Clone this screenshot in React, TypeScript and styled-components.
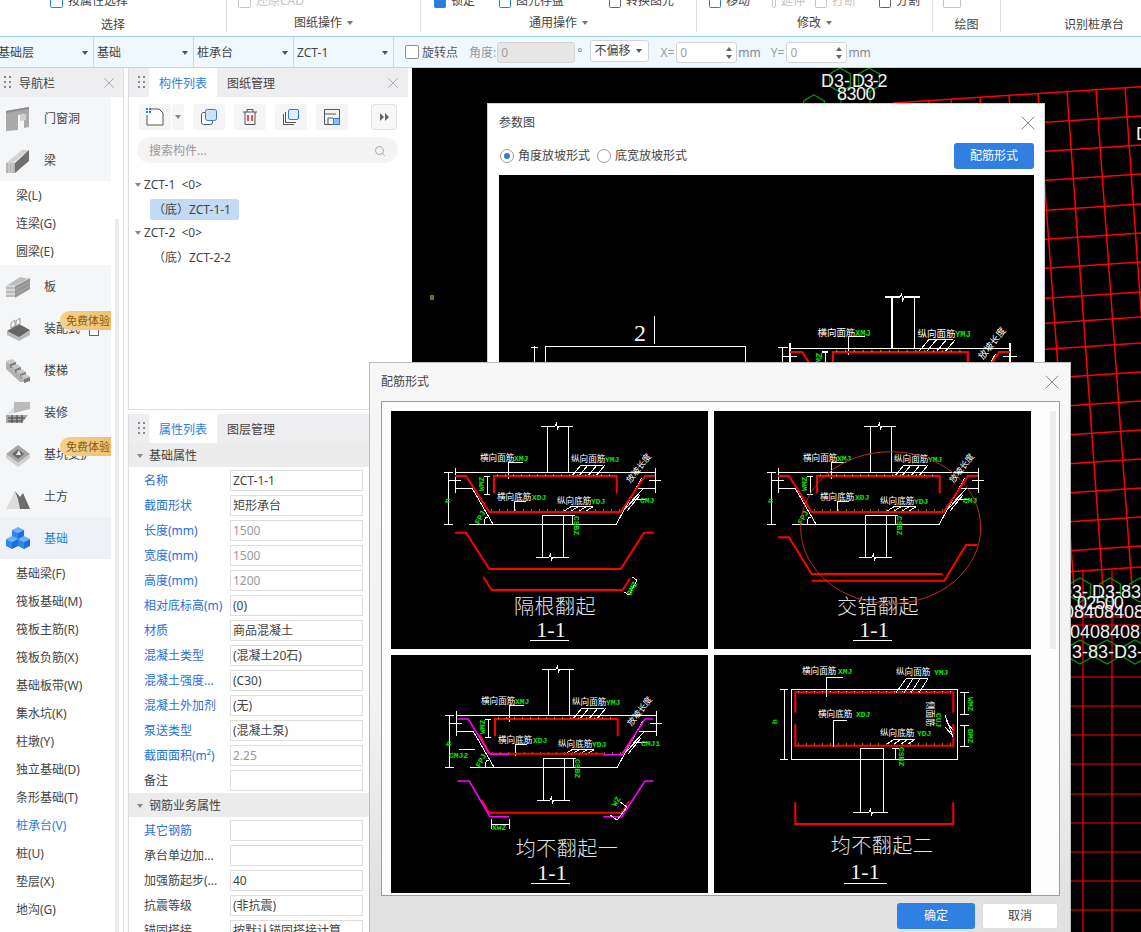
import React from "react";
import styled, { createGlobalStyle } from "styled-components";
import { Search, X } from "lucide-react";

const Global = createGlobalStyle`
  html, body { margin: 0; padding: 0; background: #fff; }
  body { font-family: "Noto Sans", "Noto Sans CJK SC", sans-serif; font-size: 12px; color: #333; }
`;

const Page = styled.div`
  position: relative; width: 1141px; height: 932px; overflow: hidden;
  display: flex; flex-direction: column; background: #fff;
`;

/* ---------- ribbon ---------- */
const Ribbon = styled.div`
  flex: none; height: 37px; box-sizing: border-box; display: flex; overflow: hidden;
  border-bottom: 1px solid #9dcdf5; background: #fff;
`;
const RibbonGroup = styled.div<{ $w: number }>`
  flex: none; width: ${p => p.$w}px; height: 32px; box-sizing: border-box;
  border-right: 1px solid #dcdcdc; display: flex; flex-direction: column;
`;
const LastGroup = styled(RibbonGroup)`border-right: 0;`;
const GroupTools = styled.div<{ $pad: number }>`
  flex: none; height: 18px; margin-top: -8px; padding-left: ${p => p.$pad}px;
  display: flex; align-items: center;
`;
const RibbonItem = styled.div<{ $w?: number; $off?: boolean }>`
  flex: none; display: flex; align-items: center; gap: 4px; line-height: 18px;
  ${p => (p.$w ? `width: ${p.$w}px;` : "")}
  color: ${p => (p.$off ? "#c4c4c4" : "#444")};
`;
const GroupLabel = styled.div<{ $low?: boolean }>`
  flex: 1; display: flex; justify-content: center; align-items: flex-start; gap: 5px;
  line-height: 16px; color: #444; padding-top: ${p => (p.$low ? 7 : 5)}px;
`;
const MiniCaret = styled.span<{ $c?: string }>`
  display: inline-block; width: 0; height: 0; margin-top: 6px;
  border-left: 3.5px solid transparent; border-right: 3.5px solid transparent;
  border-top: 4px solid ${p => p.$c || "#777"};
`;
const TreeCaret = styled(MiniCaret)`margin: 0; border-top-color: #888;`;

const Glyph = ({ w = 14, c = "#666", fill = "none" }: { w?: number; c?: string; fill?: string }) => (
  <svg width={w} height={16} viewBox={`0 0 ${w} 16`}>
    <rect x={1.5} y={1.5} width={w - 3} height={13} rx={1} fill={fill} stroke={c} />
  </svg>
);

/* ---------- option bar ---------- */
const OptionBar = styled.div`
  flex: none; height: 31px; box-sizing: border-box; display: flex; align-items: center;
  background: #eff8fe; border-bottom: 1px solid #bcd6ea; line-height: 16px; overflow: hidden;
`;
const OptionCell = styled.div<{ $w: number; $lead?: boolean }>`
  flex: none; width: ${p => p.$w}px; height: 30px; box-sizing: border-box; padding: 1px 5px 0 3px;
  ${p => (p.$lead ? "margin-left: -5px;" : "")}
  border-right: 1px solid #cfd8df; display: flex; align-items: center; justify-content: space-between; color: #444;
`;
const OptionCaret = styled(MiniCaret)`margin: 0; border-top-color: #555;`;
const CheckBox = styled.span`
  flex: none; width: 14px; height: 14px; box-sizing: border-box; margin: 0 3px 0 11px;
  border: 1px solid #8f8f8f; border-radius: 2px; background: #fff;
`;
const OptText = styled.span<{ $m?: number; $c?: string }>`
  flex: none; margin-left: ${p => p.$m ?? 0}px; padding-top: 1px; color: ${p => p.$c || "#555"};
`;
const OptInput = styled.div<{ $w: number; $off?: boolean; $ml?: number }>`
  flex: none; width: ${p => p.$w}px; height: 21px; box-sizing: border-box; margin-left: ${p => p.$ml ?? 1}px; padding: 1px 4px 0 3px;
  display: flex; align-items: center; justify-content: space-between; border: 1px solid #d4d4d4; border-radius: 3px;
  background: ${p => (p.$off ? "#e6e6e6" : "#fff")}; color: #a0a0a0;
`;
const Spin = styled.span`display: flex; flex-direction: column; gap: 4px;`;
const SpinUp = styled.i`
  display: block; width: 0; height: 0;
  border-left: 3px solid transparent; border-right: 3px solid transparent; border-bottom: 4px solid #666;
`;
const SpinDown = styled(SpinUp)`border-bottom: 0; border-top: 4px solid #666;`;
const OptSelect = styled.div`
  flex: none; width: 59px; height: 22px; box-sizing: border-box; margin-left: 8px; padding: 0 6px 0 3px; margin-top: -3px;
  display: flex; align-items: center; justify-content: space-between; border: 1px solid #d4d4d4; border-radius: 3px;
  background: #fff; color: #444;
`;

/* ---------- workspace ---------- */
const Workspace = styled.div`flex: 1; min-height: 0; display: flex;`;
const NavPanel = styled.div`
  flex: none; width: 124px; box-sizing: border-box; border-right: 1px solid #dedede;
  display: flex; flex-direction: column; overflow: hidden;
`;
const PanelHead = styled.div`
  flex: none; height: 29px; display: flex; align-items: center; background: #eeeef0; color: #444; line-height: 16px;
`;
const HeadTitle = styled.span`flex: none; padding-top: 2px;`;
const Dots = styled.span<{ $m: number; $l: number }>`
  flex: none; width: 7px; height: 14px; margin: 0 ${p => p.$m}px 0 ${p => p.$l}px;
  background-image: radial-gradient(circle at 1.2px 1.2px, #8a8a8a 1.1px, transparent 1.3px);
  background-size: 5px 5px;
`;
const HeadFill = styled.span`flex: 1;`;
const CloseX = styled.span<{ $r: number; $c?: string }>`flex: none; display: flex; margin-right: ${p => p.$r}px; color: ${p => p.$c || "#9a9a9a"};`;
const NavBody = styled.div`flex: 1; min-height: 0; display: flex;`;
const NavList = styled.div`flex: none; width: 111px; display: flex; flex-direction: column;`;
const NavTrack = styled.div`flex: 1; padding: 122px 0 0 4px;`;
const NavThumb = styled.div`width: 4px; height: 100%; background: #ececec;`;
const NavItem = styled.div<{ $on?: boolean }>`
  position: relative; flex: none; height: 42px; box-sizing: border-box; display: flex; align-items: center; padding: 1px 0 0 6px; gap: 14px;
  line-height: 16px; background: ${p => (p.$on ? "#eef1f5" : "#f5f6f8")}; color: ${p => (p.$on ? "#2b7de0" : "#444")};
`;
const NavSub = styled.div<{ $on?: boolean }>`
  flex: none; height: 28px; line-height: 29px; padding-left: 16px;
  color: ${p => (p.$on ? "#2b7de0" : "#444")};
`;
const Badge = styled.span`
  position: absolute; right: 0; top: 4px; width: 51px; height: 19px; line-height: 19px; padding-left: 6px; box-sizing: border-box;
  border-radius: 10px 0 0 10px; background: linear-gradient(90deg, #f4d08f, #eec170); color: #8b5a12; white-space: nowrap; overflow: hidden;
  font-size: 11px;
`;
const LockMark = styled.span`
  position: absolute; right: 12px; bottom: 13px; width: 8px; height: 8px; border: 1px solid #666; background: #fff;
`;
const Gutter = styled.div`flex: none; width: 4px;`;
const MiddleColumn = styled.div`
  flex: none; width: 280px; display: flex; flex-direction: column; gap: 4px;
`;
const ListPanel = styled.div`
  flex: none; height: 342px; box-sizing: border-box; border: 1px solid #dedede; border-top: 0; border-right: 0;
  display: flex; flex-direction: column; overflow: hidden; background: #fff;
`;
const PropPanel = styled(ListPanel)`flex: 1; height: auto; border-bottom: 0;`;
const Tab = styled.span<{ $on?: boolean }>`
  flex: none; width: 68px; height: 29px; line-height: 32px; text-align: center;
  background: ${p => (p.$on ? "#fff" : "transparent")}; color: ${p => (p.$on ? "#2b7de0" : "#444")};
`;
const ToolRow = styled.div`flex: none; display: flex; align-items: center; padding: 7px 11px 0 10px;`;
const ToolBtn = styled.div<{ $m?: number }>`
  flex: none; width: 32px; height: 26px; display: flex; align-items: center; justify-content: center;
  background: #f5f5f5; border-radius: 3px; margin-right: ${p => p.$m ?? 9}px;
`;
const SplitCaret = styled(ToolBtn)`width: 12px; margin-left: 1px;`;
const MoreBtn = styled.div`
  flex: none; width: 26px; height: 26px; box-sizing: border-box; display: flex; align-items: center; justify-content: center;
  background: #f7f7f7; border: 1px solid #e2e2e2; border-radius: 3px;
`;
const SearchBox = styled.div`
  flex: none; margin: 7px 10px 0 8px; height: 26px; box-sizing: border-box; border-radius: 13px; background: #f4f4f4; display: flex; align-items: center;
  padding: 1px 12px 0; justify-content: space-between; color: #999; line-height: 16px;
`;
const Tree = styled.div`flex: none; padding-top: 10px; display: flex; flex-direction: column; color: #444;`;
const TreeRoot = styled.div`height: 24px; display: flex; align-items: center; gap: 3px; padding-left: 6px; line-height: 16px;`;
const TreeLeafRow = styled.div`height: 24px; display: flex; align-items: center; padding-left: 21px;`;
const TreeLeaf = styled.span<{ $on?: boolean }>`
  display: inline-block; height: 21px; line-height: 21px; padding: 0 3px; border-radius: 2px; width: 89px; box-sizing: border-box;
  white-space: nowrap; background: ${p => (p.$on ? "#c3daf2" : "transparent")};
`;
const SectionRow = styled.div`
  flex: none; height: 24px; box-sizing: border-box; padding: 2px 0 0 8px; display: flex; align-items: center; gap: 6px; line-height: 16px;
  background: #ececec; color: #444;
`;
const PropRow = styled.div`flex: none; height: 25px; box-sizing: border-box; padding: 3px 0 0 15px; display: flex; align-items: flex-start;`;
const PropLabel = styled.span<{ $blue?: boolean }>`
  flex: none; width: 86px; line-height: 21px; white-space: nowrap; overflow: hidden; color: ${p => (p.$blue ? "#2a6fe0" : "#444")};
`;
const PropValue = styled.span<{ $grey?: boolean }>`
  flex: none; width: 133px; height: 21px; box-sizing: border-box; border: 1px solid #dedede; padding-left: 2px; line-height: 19px;
  white-space: nowrap; overflow: hidden; background: #fff; color: ${p => (p.$grey ? "#999" : "#444")};
`;
const PropList = styled.div`flex: 1; min-height: 0; display: flex; flex-direction: column; overflow: hidden;`;
const SectionGap = styled.div`flex: none; height: 1px;`;

const Canvas = styled.div`flex: 1; min-width: 0; background: #000; overflow: hidden;`;
const CanvasSvg = styled.svg`display: block;`;
const CadText = styled.text<{ $sp?: number }>`
  font-family: "Liberation Sans", sans-serif; font-size: 18px; fill: #f2f2f2; letter-spacing: ${p => p.$sp ?? 0}px;
`;

/* ---------- dialogs ---------- */
const ParamDialog = styled.div`
  position: absolute; left: 487px; top: 103px; width: 558px; height: 300px; box-sizing: border-box; padding: 0 10px 0 11px;
  background: #fff; border: 1px solid #cfcfcf; display: flex; flex-direction: column; overflow: hidden;
`;
const DialogHead = styled.div`
  flex: none; height: 38px; display: flex; align-items: center; justify-content: space-between; color: #444; line-height: 16px;
`;
const ParamOptions = styled.div`flex: none; height: 26px; margin-top: 1px; display: flex; align-items: center; color: #444; line-height: 16px;`;
const Radio = styled.span<{ $on?: boolean; $m?: number }>`
  flex: none; width: 14px; height: 14px; box-sizing: border-box; border-radius: 50%; border: 1px solid #9b9b9b; background: #fff;
  margin: 0 4px 0 ${p => p.$m ?? 1}px; display: flex; align-items: center; justify-content: center;
  &::after { content: ""; width: 6px; height: 6px; border-radius: 50%; background: ${p => (p.$on ? "#2b7de0" : "transparent")}; }
`;
const PrimaryBtn = styled.button<{ $w: number }>`
  flex: none; width: ${p => p.$w}px; height: 26px; border: 0; border-radius: 3px; padding: 0; background: #2f80e2; color: #fff;
  font: inherit; line-height: 16px;
`;
const GhostBtn = styled(PrimaryBtn)`background: #fff; color: #444; border: 1px solid #dddddd;`;
const PushRight = styled.span`flex: 1;`;
const BlackBox = styled.div`flex: none; margin-top: 6px; height: 260px; background: #000; overflow: hidden;`;
const BlackArt = styled.svg`display: block;`;
const FormDialog = styled.div`
  position: absolute; left: 369px; top: 362px; width: 702px; height: 580px; box-sizing: border-box; padding: 0 11px;
  border: 1px solid #bdbdbd; background: linear-gradient(180deg, #f7f7f7 0, #f2f2f2 60%, #e1e1e1 92%); display: flex; flex-direction: column;
`;
const GalleryBox = styled.div`
  flex: none; height: 495px; box-sizing: border-box; width: 679px; border: 1px solid #9c9c9c; background: #fcfcfc; overflow: hidden;
  display: flex; padding: 9px 0 0 9px;
`;
const Gallery = styled.div`flex: none; display: grid; grid-template-columns: 317px 317px; grid-auto-rows: 238px; gap: 6px;`;
const Plate = styled.svg`display: block; background: #000;`;
const GalleryScroll = styled.div`flex: none; width: 6px; height: 238px; margin-left: 19px; background: #ececec;`;
const FormFoot = styled.div`flex: none; margin-top: 7px; padding-right: 1px; display: flex; justify-content: flex-end; gap: 7px;`;

/* ---------- drawing text ---------- */
const DLabel = styled.text`font-family: "Noto Sans CJK SC", sans-serif; font-size: 8.6px; fill: #fff;`;
const DCode = styled.text`font-family: "Liberation Mono", monospace; font-size: 8px; font-weight: bold; fill: #00e600;`;
const DTitle = styled.text`
  font-family: "Noto Sans CJK SC", sans-serif; font-size: 20px; font-weight: 300; fill: #e2e2e2; text-anchor: middle; letter-spacing: 0.5px;
`;
const DSect = styled.text`font-family: "Liberation Serif", serif; font-size: 22px; fill: #f5f5f5; text-anchor: middle;`;
const DBigDigit = styled(DSect)`font-size: 24px;`;

const W = ({ d }: { d: string }) => <path d={d} fill="none" stroke="#fff" strokeWidth={1} shapeRendering="crispEdges" />;
const R = ({ d, c = "#f00", sw = 2 }: { d: string; c?: string; sw?: number }) => <path d={d} fill="none" stroke={c} strokeWidth={sw} />;

const Dots2 = ({ x1, x2, y, step = 8 }: { x1: number; x2: number; y: number; step?: number }) => {
  const a: number[] = [];
  for (let x = x1; x <= x2; x += step) a.push(x);
  return <>{a.map(x => <rect key={x} x={x} y={y} width={1} height={1} fill="#ff0" />)}</>;
};

/* shared sloped pile-cap section */
const SlopedFrame = ({ cmj = "CMJ" }: { cmj?: string }) => (
  <g>
    <W d="M150 15H164l1.5-3 1 6 1.5-3H182M156.7 15V61.5M177 15V61.5M64 61.5H264M64 57V82M264 57V82M64 77H81L102.3 113.7M78 113.7H225L250.7 67M247 77H264" />
    <W d="M57 61V113.7M53 61H62M53 113.7H62M58 69H70M258 69H270" />
    <W d="M145 146.3H158l1.5-3 1 6 1.5-3H178M151 146.3V104.7H172V146.3" />
    <W d="M96 65V83M93 65H99M93 83H99M172 104.7H184M181 105V113.5M93 113.7Q93 105 98 106" />
    <W d="M180 66L190 54H212M187 66L197 54M196 66L206 54M204 66L214 54" />
    <W d="M172 100.7L180 95.7H201M179 100.7L187 95.7M187 100.7L195 95.7M194 100.7L202 95.7" />
    <W d="M117 68V51.3H132M123 102V90H135" />
    <W d="M232 100L244 88H255M236 100L249 84M238 93L252 78" />
    <R d="M103 82.3V65H225.7V82.3" />
    <Dots2 x1={106} x2={224} y={63.5} />
    <Dots2 x1={100} x2={228} y={98.5} />
    <DLabel x={89} y={50}>横向面筋</DLabel>
    <DCode x={123} y={50}>XMJ</DCode>
    <DLabel x={180} y={51}>纵向面筋</DLabel>
    <DCode x={214} y={51}>YMJ</DCode>
    <DLabel x={106} y={89}>横向底筋</DLabel>
    <DCode x={141} y={89}>XDJ</DCode>
    <DLabel x={166} y={93}>纵向底筋</DLabel>
    <DCode x={200} y={93}>YDJ</DCode>
    <DCode x={0} y={0} transform="translate(59 92) rotate(-90)">h</DCode>
    <DCode x={0} y={0} transform="translate(93 80) rotate(-90)">WMZ</DCode>
    <DCode x={0} y={0} transform="translate(183 105) rotate(90)">CSBZ</DCode>
    <DCode x={0} y={0} transform="translate(88 114) rotate(-62)">FPJ</DCode>
    <DCode x={249} y={92}>{cmj}</DCode>
    <DLabel x={0} y={0} textAnchor="middle" transform="translate(250 59) rotate(-52)">放坡长度</DLabel>
  </g>
);

const PlateOne = () => (
  <Plate width={317} height={238} viewBox="0 0 317 238">
    <SlopedFrame />
    <R d="M64 65H75L98.3 101H229.7L254 65H264" />
    <R d="M64 121.7H75L98.3 158H229.7L253 121.7H263" />
    <R d="M92.3 165.7L100.7 179H231.7L239 167.3" />
    <W d="M241 166L246 169L238 184L233 181" />
    <DCode x={0} y={0} transform="translate(240 185) rotate(-62)">DMZ</DCode>
    <DTitle x={164} y={203}>隔根翻起</DTitle>
    <DSect x={160} y={226}>1-1</DSect>
    <W d="M139 229H178" />
  </Plate>
);
const PlateTwo = () => (
  <Plate width={317} height={238} viewBox="0 0 317 238">
    <SlopedFrame />
    <R d="M64 65H75L97.7 101H229.7L254 65H264" />
    <R d="M64 126.3H75L97.7 163H228.7" />
    <R d="M97.7 169.7H230.3L252 134H263.3" />
    <DTitle x={164} y={203}>交错翻起</DTitle>
    <DSect x={160} y={226}>1-1</DSect>
    <W d="M139 229H178" />
    <ellipse cx={176.7} cy={116.7} rx={90} ry={76} fill="none" stroke="#b92b2b" strokeWidth={1} />
  </Plate>
);
const PlateThree = () => (
  <Plate width={317} height={238} viewBox="0 0 317 238">
    <g transform="translate(1 -1)"><SlopedFrame cmj="CMJ1" /></g>
    <R d="M99 98.7H212.3" />
    <R d="M89 80L98 99M231.7 99L242 83" />
    <R d="M66.3 64H77.3L99 99.3H118M212.3 99.7H230.7L254 64H262.3" c="#f0f" sw={1.6} />
    <R d="M99 157.7H230.7" />
    <R d="M90.7 145L98.3 157.7M230.7 157.7L238.3 146" sw={1.5} />
    <R d="M66.3 126H78.3L99 161.7H118M212.3 161.7H230.7L254 126H262.3" c="#f0f" sw={1.6} />
    <W d="M100 164V174M118 164V174M100 169H118M229 147L236 152L226 165L219 160" />
    <DCode x={101} y={175}>XWZ</DCode>
    <DCode x={58} y={103}>CMJ2</DCode>
    <W d="M68 94H84" />
    <DCode x={0} y={0} transform="translate(225 152) rotate(-60)">WZ</DCode>
    <DTitle x={176} y={201}>均不翻起一</DTitle>
    <DSect x={161} y={225}>1-1</DSect>
    <W d="M140 228H179" />
  </Plate>
);
const PlateFour = () => (
  <Plate width={317} height={238} viewBox="0 0 317 238">
    <W d="M77.3 34.3H243.7V104.3H77.3ZM70 34.3V104.3M66 34.3H74M66 104.3H74" />
    <R d="M81.3 57.7V37.3H239.3V57.7M81.3 69V90.7H239.3V69" />
    <W d="M146.7 157.3V93.3H169.3V157.3M139.3 157.3H155l1.5-3 1 6 1.5-3H173.7" />
    <W d="M112.3 41.7V22.3H129M119.3 92.3V65.7H132.7" />
    <W d="M182 37.7L192 23.7H214M190 37.7L199 23.7M197 37.7L206 23.7M205 37.7L214 23.7" />
    <W d="M173 89L180 84.3H201M180 89L187 84.3M187 89L194 84.3M194 89L201 84.3" />
    <W d="M250.3 37.3V59.3M246 37.3H255M246 59.3H255M250.3 70V91.7M246 70H255M246 91.7H255M181.7 93V104M178 93.3H185" />
    <W d="M231 60L239 82M232 66L239 75M231 72L238 80" />
    <Dots2 x1={84} x2={236} y={36} step={8} />
    <Dots2 x1={84} x2={236} y={88.5} step={8} />
    <DLabel x={88} y={19}>横向面筋</DLabel>
    <DCode x={124} y={19}>XMJ</DCode>
    <DLabel x={182} y={20}>纵向面筋</DLabel>
    <DCode x={220} y={20}>YMJ</DCode>
    <DLabel x={104} y={62}>横向底筋</DLabel>
    <DCode x={142} y={62}>XDJ</DCode>
    <DLabel x={166} y={81}>纵向底筋</DLabel>
    <DCode x={203} y={81}>YDJ</DCode>
    <DCode x={0} y={0} transform="translate(63 69) rotate(-90)">h</DCode>
    <DCode x={0} y={0} transform="translate(254 42) rotate(90)">WMZ</DCode>
    <DCode x={0} y={0} transform="translate(254 74) rotate(90)">DMZ</DCode>
    <DCode x={0} y={0} transform="translate(185 92) rotate(90)">CSBZ</DCode>
    <DCode x={0} y={0} transform="translate(222 58) rotate(90)">CUJ</DCode>
    <DLabel x={0} y={0} transform="translate(213 46) rotate(90)">侧面筋</DLabel>
    <R d="M81.3 147.3V169H239.3V147.3" />
    <DTitle x={168} y={198}>均不翻起二</DTitle>
    <DSect x={151} y={224}>1-1</DSect>
    <W d="M130 228.3H172.7" />
  </Plate>
);

/* ---------- nav icons ---------- */
const Cube = ({ x, y }: { x: number; y: number }) => (
  <g transform={`translate(${x} ${y})`}>
    <path d="M0 -6L6 -3L0 0L-6 -3Z" fill="#6cb0f8" />
    <path d="M-6 -3L0 0V7L-6 4Z" fill="#2f86ee" />
    <path d="M6 -3L0 0V7L6 4Z" fill="#1a6fdc" />
  </g>
);
const Step = ({ x, y }: { x: number; y: number }) => (
  <g transform={`translate(${x} ${y})`}>
    <path d="M0 2L6 0L10 3L4 5Z" fill="#c8c8c8" />
    <path d="M4 5L10 3V7L4 9Z" fill="#7c7c7c" />
  </g>
);
const NavGlyph = styled.svg`flex: none; display: block;`;
const NavIcon = ({ k }: { k: string }) => {
  const pick = () => {
    switch (k) {
      case "door":
        return (<><path d="M0 4L23 0V20L18 21V7L12 8V23L0 24Z" fill="#a9a9a9" /><path d="M0 4L23 0L23 2L0 6Z" fill="#8c8c8c" /><path d="M14 8L20 7V13L14 14Z" fill="#cfcfcf" /></>);
      case "beam":
        return (<><path d="M0 14L16 1L23 1L7 14Z" fill="#d4d4d4" /><path d="M0 14H9V24H0Z" fill="#b4b4b4" /><path d="M3 14V24M6 14V24" stroke="#eee" strokeWidth={0.7} /><path d="M9 14L23 1V12L9 24Z" fill="#6f6f6f" /></>);
      case "slab":
        return (<><path d="M0 11L14 2L24 4V14L9 22H0Z" fill="#bdbdbd" /><path d="M0 11H9L24 3M0 15H9L24 7M0 19H9L24 11" stroke="#f0f0f0" fill="none" /><path d="M9 11L24 3V14L9 23Z" fill="#757575" opacity={0.55} /></>);
      case "prefab":
        return (<><path d="M1 14L13 7L24 13L13 21Z" fill="#666" /><path d="M1 14V18L13 24L24 18V13L13 20Z" fill="#b8b8b8" /><path d="M5 6L9 3V9L5 11ZM10 4L14 1V7L10 9Z" fill="none" stroke="#999" /></>);
      case "stair":
        return (<><path d="M0 2V10L14 23H18V18L4 5Z" fill="#b2b2b2" /><Step x={0} y={0} /><Step x={5} y={5} /><Step x={10} y={10} /><Step x={14} y={15} /></>);
      case "finish":
        return (<><path d="M8 12V1H24V8Z" fill="#bbb" /><path d="M0 14H22L16 22H0Z" fill="#a8a8a8" /><path d="M2 17H19M2 20H16M6 14V22M11 14V22M16 14V22" stroke="#444" /><path d="M0 14L8 6V12Z" fill="#ddd" /></>);
      case "pit":
        return (<><path d="M0 11L12 2L24 11L12 20Z" fill="#a6a6a6" /><path d="M0 11V15L12 24L24 15V11L12 20Z" fill="#cfcfcf" /><path d="M6 11L12 6L18 11L12 16Z" fill="#6b6b6b" /><path d="M10 12L13 7L15 12Z" fill="#eee" /></>);
      case "earth":
        return (<><path d="M0 24L9 6L14 12L17 8L24 24Z" fill="#dcdcdc" /><path d="M9 6L12 14L14 24H24L17 8L14 12Z" fill="#6d6d6d" /></>);
      case "found":
        return (<><Cube x={12} y={6} /><Cube x={6} y={15} /><Cube x={18} y={15} /></>);
      default:
        return null;
    }
  };
  return <NavGlyph width={24} height={24} viewBox="0 0 24 24">{pick()}</NavGlyph>;
};

/* ---------- toolbar icons ---------- */
const NewIcon = () => (
  <svg width={22} height={22} viewBox="0 0 22 22">
    <path d="M7 3H15L19 7V19H3V9" fill="#fff" stroke="#555" />
    <rect x={2} y={2} width={5} height={5} fill="#2b7de0" />
    <path d="M2 4.5H7M4.5 2V7" stroke="#fff" />
  </svg>
);
const CopyIcon = () => (
  <svg width={18} height={18} viewBox="0 0 18 18">
    <rect x={1.5} y={4.5} width={11} height={12} rx={2} fill="#fff" stroke="#555" />
    <rect x={5.5} y={1.5} width={11} height={11} rx={2} fill="#cfe2fa" stroke="#2b7de0" />
  </svg>
);
const TrashIcon = () => (
  <svg width={16} height={18} viewBox="0 0 16 18">
    <path d="M1 4H15M5 4V1.5H11V4M3 4V16.5H13V4" fill="none" stroke="#555" />
    <path d="M6 7V13M10 7V13" stroke="#e02020" strokeWidth={1.5} />
  </svg>
);
const StackIcon = () => (
  <svg width={18} height={18} viewBox="0 0 18 18">
    <path d="M1.5 6V16.5H12" fill="none" stroke="#555" />
    <path d="M3.5 4V14.5H14" fill="none" stroke="#555" />
    <rect x={6.5} y={1.5} width={10} height={10} rx={1.5} fill="#e3eefc" stroke="#2b7de0" />
  </svg>
);
const SaveIcon = () => (
  <svg width={18} height={18} viewBox="0 0 18 18">
    <path d="M1.5 1.5H16.5V10M10 16.5H1.5V1.5M1.5 6H13M5 16.5V10H10" fill="none" stroke="#555" />
    <rect x={10.5} y={10.5} width={6} height={6} fill="#8ec0f7" stroke="#2b7de0" />
  </svg>
);
const MoreIcon = () => (
  <svg width={9} height={8} viewBox="0 0 9 8">
    <path d="M0 0L4 4L0 8ZM5 0L9 4L5 8Z" fill="#666" />
  </svg>
);

/* ---------- canvas ---------- */
const Hex = ({ x, y, r = 12 }: { x: number; y: number; r?: number }) => {
  const pts = [0, 1, 2, 3, 4, 5]
    .map(i => {
      const a = (Math.PI / 3) * i + Math.PI / 6;
      return `${x + r * Math.cos(a)},${y + r * Math.sin(a)}`;
    })
    .join(" ");
  return <polygon points={pts} fill="none" stroke="#0c8f0c" strokeWidth={1.3} />;
};
const hLines = [86.7, 116, 145, 174, 204, 233, 262, 292, 317, 343, 372, 401, 430, 459, 488, 517, 546, 567];
const vLines = [929, 951, 980, 1009, 1038, 1067, 1096, 1125];
const flatLines = [617, 625, 677, 706, 735, 764, 794, 823, 852, 881, 910];

const CanvasArt = () => (
  <CanvasSvg width={729} height={864} viewBox="412 68 729 864">
    {hLines.map(y => (
      <line key={y} x1={893} y1={y + 248 * 0.066} x2={1141} y2={y} stroke="#f00" strokeWidth={1.5} />
    ))}
    {vLines.map(x => {
      const top = 86.7 + (1141 - x) * 0.066;
      return <line key={x} x1={x} y1={top} x2={x + (585 - 92) * 0.0726} y2={585} stroke="#f00" strokeWidth={1.5} />;
    })}
    {flatLines.map(y => <line key={y} x1={1071} y1={y} x2={1141} y2={y} stroke="#f00" strokeWidth={1.2} />)}
    <line x1={1083} y1={570} x2={1083} y2={932} stroke="#f00" strokeWidth={1.2} />
    <line x1={1112} y1={570} x2={1112} y2={932} stroke="#f00" strokeWidth={1.2} />
    <rect x={430} y={295} width={4} height={5} fill="#6f6f14" />
    <Hex x={840} y={80} /><Hex x={869} y={80} /><Hex x={814} y={107} />
    <line x1={870} y1={92} x2={870} y2={105} stroke="#0c8f0c" />
    <line x1={841} y1={96} x2={841} y2={105} stroke="#0c8f0c" />
    <CadText x={821} y={87}>D3-</CadText>
    <CadText x={852} y={87} $sp={-1.2}>D3-2</CadText>
    <CadText x={837} y={100} $sp={-0.5}>8300</CadText>
    <CadText x={1136} y={140}>D</CadText>
    <Hex x={1080} y={590} /><Hex x={1110} y={590} /><Hex x={1140} y={590} />
    <Hex x={1080} y={652} /><Hex x={1107} y={652} /><Hex x={1135} y={652} />
    <CadText x={1059} y={598}>D3-</CadText>
    <CadText x={1092} y={598}>D3-</CadText>
    <CadText x={1121} y={598}>83</CadText>
    <CadText x={1077} y={609} $sp={-0.8}>02500</CadText>
    <CadText x={1064} y={618}>08408408</CadText>
    <CadText x={1070} y={638}>0408408-</CadText>
    <CadText x={1072} y={658}>3-83-D3-</CadText>
  </CanvasSvg>
);

type Row = { l: string; v?: string; b?: boolean; g?: boolean };
const baseRows: Row[] = [
  { l: "名称", v: "ZCT-1-1", b: true },
  { l: "截面形状", v: "矩形承台", b: true },
  { l: "长度(mm)", v: "1500", b: true, g: true },
  { l: "宽度(mm)", v: "1500", b: true, g: true },
  { l: "高度(mm)", v: "1200", b: true, g: true },
  { l: "相对底标高(m)", v: "(0)", b: true },
  { l: "材质", v: "商品混凝土", b: true },
  { l: "混凝土类型", v: "(混凝土20石)", b: true },
  { l: "混凝土强度...", v: "(C30)", b: true },
  { l: "混凝土外加剂", v: "(无)", b: true },
  { l: "泵送类型", v: "(混凝土泵)", b: true },
  { l: "截面面积(m²)", v: "2.25", b: true, g: true },
  { l: "备注" },
];
const steelRows: Row[] = [
  { l: "其它钢筋", b: true },
  { l: "承台单边加..." },
  { l: "加强筋起步(...", v: "40" },
  { l: "抗震等级", v: "(非抗震)" },
  { l: "锚固搭接", v: "按默认锚固搭接计算" },
];
const subs1 = ["梁(L)", "连梁(G)", "圆梁(E)"];
const subs2 = ["基础梁(F)", "筏板基础(M)", "筏板主筋(R)", "筏板负筋(X)", "基础板带(W)", "集水坑(K)", "柱墩(Y)", "独立基础(D)", "条形基础(T)", "桩承台(V)", "桩(U)", "垫层(X)", "地沟(G)"];

const PropLine = ({ r }: { r: Row }) => (
  <PropRow>
    <PropLabel $blue={r.b}>{r.l}</PropLabel>
    <PropValue $grey={r.g}>{r.v}</PropValue>
  </PropRow>
);

export default function App() {
  return (
    <Page>
      <Global />
      <Ribbon>
        <RibbonGroup $w={227}>
          <GroupTools $pad={49}>
            <RibbonItem><Glyph w={15} c="#2b7de0" />按属性选择</RibbonItem>
          </GroupTools>
          <GroupLabel $low>选择</GroupLabel>
        </RibbonGroup>
        <RibbonGroup $w={194}>
          <GroupTools $pad={10}>
            <RibbonItem $off><Glyph w={15} c="#c4c4c4" />还原CAD</RibbonItem>
          </GroupTools>
          <GroupLabel>图纸操作<MiniCaret /></GroupLabel>
        </RibbonGroup>
        <RibbonGroup $w={276}>
          <GroupTools $pad={12}>
            <RibbonItem $w={65}><Glyph c="#2b7de0" fill="#2b7de0" />锁定</RibbonItem>
            <RibbonItem $w={110}><Glyph c="#2b7de0" />图元存盘</RibbonItem>
            <RibbonItem><Glyph />转换图元</RibbonItem>
          </GroupTools>
          <GroupLabel>通用操作<MiniCaret /></GroupLabel>
        </RibbonGroup>
        <RibbonGroup $w={236}>
          <GroupTools $pad={11}>
            <RibbonItem $w={63}><Glyph c="#2b7de0" />移动</RibbonItem>
            <RibbonItem $w={43} $off><Glyph w={6} c="#c4c4c4" />延伸</RibbonItem>
            <RibbonItem $w={64} $off><Glyph c="#c4c4c4" />打断</RibbonItem>
            <RibbonItem><Glyph />分割</RibbonItem>
          </GroupTools>
          <GroupLabel>修改<MiniCaret /></GroupLabel>
        </RibbonGroup>
        <RibbonGroup $w={68}>
          <GroupTools $pad={9}>
            <RibbonItem $off><Glyph w={20} c="#c4c4c4" /></RibbonItem>
          </GroupTools>
          <GroupLabel $low>绘图</GroupLabel>
        </RibbonGroup>
        <LastGroup $w={186}>
          <GroupTools $pad={0} />
          <GroupLabel $low>识别桩承台</GroupLabel>
        </LastGroup>
      </Ribbon>

      <OptionBar>
        <OptionCell $w={99} $lead>基础层<OptionCaret /></OptionCell>
        <OptionCell $w={100}>基础<OptionCaret /></OptionCell>
        <OptionCell $w={100}>桩承台<OptionCaret /></OptionCell>
        <OptionCell $w={100}>ZCT-1<OptionCaret /></OptionCell>
        <CheckBox />
        <OptText>旋转点</OptText>
        <OptText $m={11} $c="#999">角度:</OptText>
        <OptInput $w={78} $off>0</OptInput>
        <OptText $m={2} $c="#888">°</OptText>
        <OptSelect>不偏移<OptionCaret /></OptSelect>
        <OptText $m={11} $c="#999">X=</OptText>
        <OptInput $w={61} $ml={2}>0<Spin><SpinUp /><SpinDown /></Spin></OptInput>
        <OptText $m={1} $c="#888">mm</OptText>
        <OptText $m={10} $c="#999">Y=</OptText>
        <OptInput $w={61} $ml={2}>0<Spin><SpinUp /><SpinDown /></Spin></OptInput>
        <OptText $m={1} $c="#888">mm</OptText>
      </OptionBar>

      <Workspace>
        <NavPanel>
          <PanelHead>
            <Dots $l={4} $m={8} /><HeadTitle>导航栏</HeadTitle><HeadFill />
            <CloseX $r={5}><X size={18} strokeWidth={1} /></CloseX>
          </PanelHead>
          <NavBody>
            <NavList>
              <NavItem><NavIcon k="door" />门窗洞</NavItem>
              <NavItem><NavIcon k="beam" />梁</NavItem>
              {subs1.map(s => <NavSub key={s}>{s}</NavSub>)}
              <NavItem><NavIcon k="slab" />板</NavItem>
              <NavItem><NavIcon k="prefab" />装配式<LockMark /><Badge>免费体验</Badge></NavItem>
              <NavItem><NavIcon k="stair" />楼梯</NavItem>
              <NavItem><NavIcon k="finish" />装修</NavItem>
              <NavItem><NavIcon k="pit" />基坑支护<Badge>免费体验</Badge></NavItem>
              <NavItem><NavIcon k="earth" />土方</NavItem>
              <NavItem $on><NavIcon k="found" />基础</NavItem>
              {subs2.map(s => <NavSub key={s} $on={s === "桩承台(V)"}>{s}</NavSub>)}
            </NavList>
            <NavTrack><NavThumb /></NavTrack>
          </NavBody>
        </NavPanel>
        <Gutter />
        <MiddleColumn>
          <ListPanel>
            <PanelHead>
              <Dots $l={9} $m={4} /><Tab $on>构件列表</Tab><Tab>图纸管理</Tab><HeadFill />
              <CloseX $r={6}><X size={18} strokeWidth={1} /></CloseX>
            </PanelHead>
            <ToolRow>
              <ToolBtn $m={0}><NewIcon /></ToolBtn>
              <SplitCaret><TreeCaret /></SplitCaret>
              <ToolBtn><CopyIcon /></ToolBtn>
              <ToolBtn><TrashIcon /></ToolBtn>
              <ToolBtn><StackIcon /></ToolBtn>
              <ToolBtn $m={0}><SaveIcon /></ToolBtn>
              <PushRight />
              <MoreBtn><MoreIcon /></MoreBtn>
            </ToolRow>
            <SearchBox>搜索构件...<Search size={12} color="#aaa" /></SearchBox>
            <Tree>
              <TreeRoot><TreeCaret />ZCT-1&nbsp;&nbsp;&lt;0&gt;</TreeRoot>
              <TreeLeafRow><TreeLeaf $on>（底）ZCT-1-1</TreeLeaf></TreeLeafRow>
              <TreeRoot><TreeCaret />ZCT-2&nbsp;&nbsp;&lt;0&gt;</TreeRoot>
              <TreeLeafRow><TreeLeaf>（底）ZCT-2-2</TreeLeaf></TreeLeafRow>
            </Tree>
          </ListPanel>
          <PropPanel>
            <PanelHead>
              <Dots $l={9} $m={4} /><Tab $on>属性列表</Tab><Tab>图层管理</Tab>
            </PanelHead>
            <PropList>
              <SectionRow><TreeCaret />基础属性</SectionRow>
              {baseRows.map(r => <PropLine key={r.l} r={r} />)}
              <SectionGap />
              <SectionRow><TreeCaret />钢筋业务属性</SectionRow>
              {steelRows.map(r => <PropLine key={r.l} r={r} />)}
            </PropList>
          </PropPanel>
        </MiddleColumn>
        <Gutter />
        <Canvas><CanvasArt /></Canvas>
      </Workspace>

      <ParamDialog>
        <DialogHead>参数图<CloseX $r={-6} $c="#888"><X size={24} strokeWidth={1} /></CloseX></DialogHead>
        <ParamOptions>
          <Radio $on />角度放坡形式
          <Radio $m={7} />底宽放坡形式
          <PushRight />
          <PrimaryBtn $w={80}>配筋形式</PrimaryBtn>
        </ParamOptions>
        <BlackBox>
          <BlackArt width={535} height={260} viewBox="499 175 535 260">
            <DBigDigit x={640} y={341}>2</DBigDigit>
            <W d="M654.5 316V344M545.5 400V346.3H745.5V400M534.5 346V400M531 347H538" />
            <g transform="translate(719.6 280.5) scale(1.1)"><SlopedFrame /><R d="M64 65H75L98.3 101H229.7L254 65H264" /></g>
          </BlackArt>
        </BlackBox>
      </ParamDialog>

      <FormDialog>
        <DialogHead>配筋形式<CloseX $r={-5} $c="#888"><X size={24} strokeWidth={1} /></CloseX></DialogHead>
        <GalleryBox>
          <Gallery>
            <PlateOne /><PlateTwo /><PlateThree /><PlateFour />
          </Gallery>
          <GalleryScroll />
        </GalleryBox>
        <FormFoot>
          <PrimaryBtn $w={78}>确定</PrimaryBtn>
          <GhostBtn $w={76}>取消</GhostBtn>
        </FormFoot>
      </FormDialog>
    </Page>
  );
}
